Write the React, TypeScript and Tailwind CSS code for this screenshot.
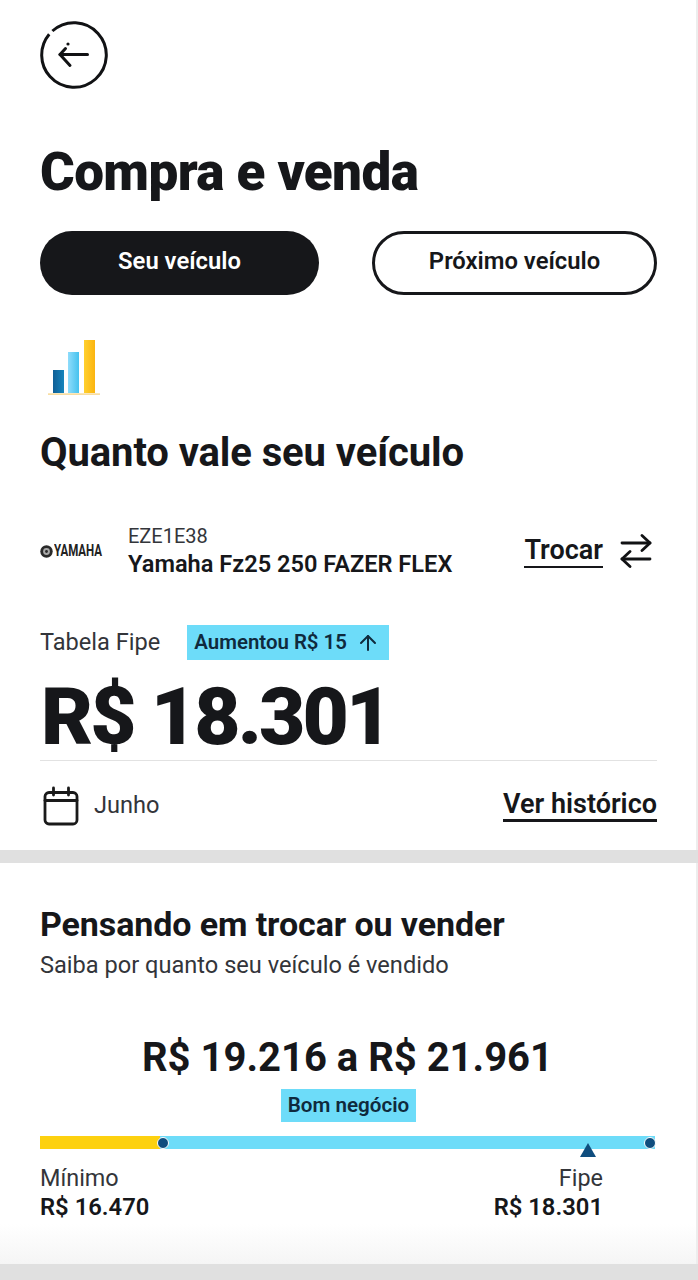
import { ArrowUp } from "lucide-react";

const FONT = "font-['Roboto','Liberation_Sans',sans-serif]";

function BackIcon() {
  return (
    <svg width="68" height="68" viewBox="0 0 68 68" fill="none" stroke="#111214" strokeLinecap="butt">
      <circle cx="34" cy="34" r="32.3" strokeWidth="3" strokeDasharray="198 5" transform="rotate(228 34 34)" />
      <path d="M20 33.5 H47.5" strokeWidth="3" strokeLinecap="round" />
      <path d="M25.5 27.5 L20 33.5 L30 44.5" strokeWidth="3" strokeLinecap="round" strokeLinejoin="round" />
      <circle cx="28" cy="23" r="1.6" fill="#111214" stroke="none" />
    </svg>
  );
}

function BarsIcon() {
  return (
    <svg width="54" height="58" viewBox="0 0 54 58">
      <defs>
        <linearGradient id="dark" x1="0" y1="0" x2="1" y2="0">
          <stop offset="0" stopColor="#0f5f96" />
          <stop offset="1" stopColor="#1685bd" />
        </linearGradient>
        <linearGradient id="light" x1="0" y1="0" x2="1" y2="0">
          <stop offset="0" stopColor="#8fdcfb" />
          <stop offset="1" stopColor="#45c2ee" />
        </linearGradient>
        <linearGradient id="gold" x1="0" y1="0" x2="1" y2="0">
          <stop offset="0" stopColor="#ffd02e" />
          <stop offset="1" stopColor="#fbb40f" />
        </linearGradient>
      </defs>
      <rect x="6" y="31" width="11" height="23" fill="url(#dark)" />
      <rect x="21" y="13" width="11" height="41" fill="url(#light)" />
      <rect x="37" y="1" width="11" height="53" fill="url(#gold)" />
      <rect x="1" y="54.5" width="52" height="1.2" fill="#f6cf7a" />
    </svg>
  );
}

function YamahaLogo() {
  return (
    <div className="flex w-[88px] shrink-0 items-center gap-px">
      <svg width="13" height="13" viewBox="0 0 13 13">
        <circle cx="6.5" cy="6.5" r="6.2" fill="#2a2a2a" />
        <circle cx="6.5" cy="6.5" r="3.4" fill="#a8a8a8" />
        <circle cx="6.5" cy="6.5" r="1.4" fill="#2a2a2a" />
      </svg>
      <span className="inline-block origin-left scale-x-[0.72] text-[16px] leading-none font-bold whitespace-nowrap text-[#222]">
        YAMAHA
      </span>
    </div>
  );
}

function SwapIcon() {
  return (
    <svg width="34" height="34" viewBox="0 0 34 34" fill="none" stroke="#111214" strokeWidth="2.8" strokeLinecap="round" strokeLinejoin="round">
      <path d="M3 9 H31" />
      <path d="M23 1.5 L31 9 L23 16.5" />
      <path d="M31 25 H3" />
      <path d="M11 17.5 L3 25 L11 32.5" />
    </svg>
  );
}

function CalendarIcon() {
  return (
    <svg width="36" height="40" viewBox="0 0 36 40" fill="none" stroke="#1a1a1a" strokeWidth="2.8" strokeLinecap="round">
      <rect x="2" y="6.5" width="32" height="31.5" rx="4" />
      <path d="M2 14.5 H34" />
      <path d="M10.5 2 V9" />
      <path d="M25.5 2 V9" />
    </svg>
  );
}

export default function App() {
  return (
    <div className={`${FONT} flex h-[1280px] w-[698px] flex-col overflow-hidden bg-white text-[#16171a]`}>
      {/* Top section */}
      <div className="flex h-[850px] shrink-0 flex-col border-r-2 border-[#ededed] pt-[21px] pr-[39px] pl-[40px]">
        <BackIcon />

        <h1 className="mt-[52px] h-[63px] text-[53px] leading-[63px] font-black tracking-[-0.6px] text-[#16171a]">
          Compra e venda
        </h1>

        <div className="mt-[27px] flex items-stretch justify-between">
          <div className="flex h-[64px] w-[279px] items-center justify-center rounded-full bg-[#16171a] pb-[2px] text-[23.8px] font-semibold text-white">
            Seu veículo
          </div>
          <div className="flex h-[64px] w-[285px] items-center justify-center rounded-full border-[3px] border-[#16171a] pb-[2px] text-[23.8px] font-semibold">
            Próximo veículo
          </div>
        </div>

        <div className="mt-[44px] ml-[7px]">
          <BarsIcon />
        </div>

        <h2 className="mt-[33px] h-[46px] text-[40px] leading-[46px] font-bold tracking-[-0.1px]">
          Quanto vale seu veículo
        </h2>

        <div className="mt-[47px] flex h-[56px] items-center">
          <YamahaLogo />
          <div className="flex flex-col">
            <span className="text-[20px] leading-[25px] text-[#33353a]">EZE1E38</span>
            <span className="text-[23.6px] leading-[30px] font-semibold">Yamaha Fz25 250 FAZER FLEX</span>
          </div>
          <div className="ml-auto flex items-center gap-[16px] pr-[4px]">
            <span className="border-b-2 border-[#16171a] text-[27px] leading-[31px] font-semibold">Trocar</span>
            <SwapIcon />
          </div>
        </div>

        <div className="mt-[46px] flex h-[35px] items-center gap-[27px]">
          <span className="text-[23.6px] text-[#33353a]">Tabela Fipe</span>
          <span className="flex h-[35px] items-center gap-[9px] bg-[#6ddcf9] pr-[9px] pl-[7px] text-[20.4px] font-semibold text-[#0f2a3d]">
            Aumentou R$ 15
            <ArrowUp size={24} strokeWidth={2} />
          </span>
        </div>

        <div className="mt-[14px] ml-[1px] h-[86px] text-[80px] leading-[86px] font-black tracking-[-2.9px]">R$ 18.301</div>

        <div className="h-px bg-[#e2e2e2]" />

        <div className="mt-[25px] flex items-center">
          <div className="ml-[3px]">
            <CalendarIcon />
          </div>
          <span className="ml-[15px] text-[23.6px] text-[#33353a]">Junho</span>
          <span className="ml-auto border-b-[3px] border-[#16171a] text-[27px] leading-[29px] font-semibold">
            Ver histórico
          </span>
        </div>
      </div>

      <div className="h-[13px] shrink-0 bg-[#e0e0e0]" />

      {/* Resale section */}
      <div className="flex flex-1 flex-col border-r-2 border-[#ededed] bg-gradient-to-b from-white from-90% to-[#f5f5f5] pt-[41px] pr-[41px] pl-[40px]">
        <h2 className="h-[40px] text-[34px] leading-[40px] font-bold tracking-[-0.1px]">Pensando em trocar ou vender</h2>
        <p className="mt-[6px] h-[30px] text-[23.6px] leading-[30px] text-[#33353a]">Saiba por quanto seu veículo é vendido</p>

        <div className="mt-[52px] h-[52px] text-center text-[40px] leading-[52px] font-bold">R$ 19.216 a R$ 21.961</div>

        <div className="mt-[5px] ml-[2px] flex justify-center">
          <span className="flex h-[33px] w-[135px] items-center justify-center bg-[#6ddcf9] text-[20.6px] font-semibold text-[#0f2a3d]">
            Bom negócio
          </span>
        </div>

        {/* Range bar */}
        <div className="relative mt-[14px] flex h-[13px] w-[615px]">
          <div className="w-[120px] bg-[#fdd10f]" />
          <div className="flex-1 bg-[#6ddcf9]" />
          <span className="absolute top-[1px] left-[117px] size-[12px] rounded-full border border-white bg-[#0f4d7e]" />
          <span className="absolute top-[1px] left-[604px] size-[12px] rounded-full border border-white bg-[#0f4d7e]" />
          <svg className="absolute top-[7px] left-[540px]" width="16" height="14" viewBox="0 0 16 14">
            <path d="M8 0 L16 14 H0 Z" fill="#0f4d7e" />
          </svg>
        </div>

        <div className="mt-[14px] flex w-[563px] justify-between">
          <div className="flex flex-col">
            <span className="text-[23.4px] leading-[30px] text-[#33353a]">Mínimo</span>
            <span className="text-[23.8px] leading-[29px] font-semibold">R$ 16.470</span>
          </div>
          <div className="flex flex-col items-end">
            <span className="text-[23.4px] leading-[30px] text-[#33353a]">Fipe</span>
            <span className="text-[23.8px] leading-[29px] font-semibold">R$ 18.301</span>
          </div>
        </div>
      </div>

      <div className="h-[16px] shrink-0 bg-[#e0e0e0]" />
    </div>
  );
}
